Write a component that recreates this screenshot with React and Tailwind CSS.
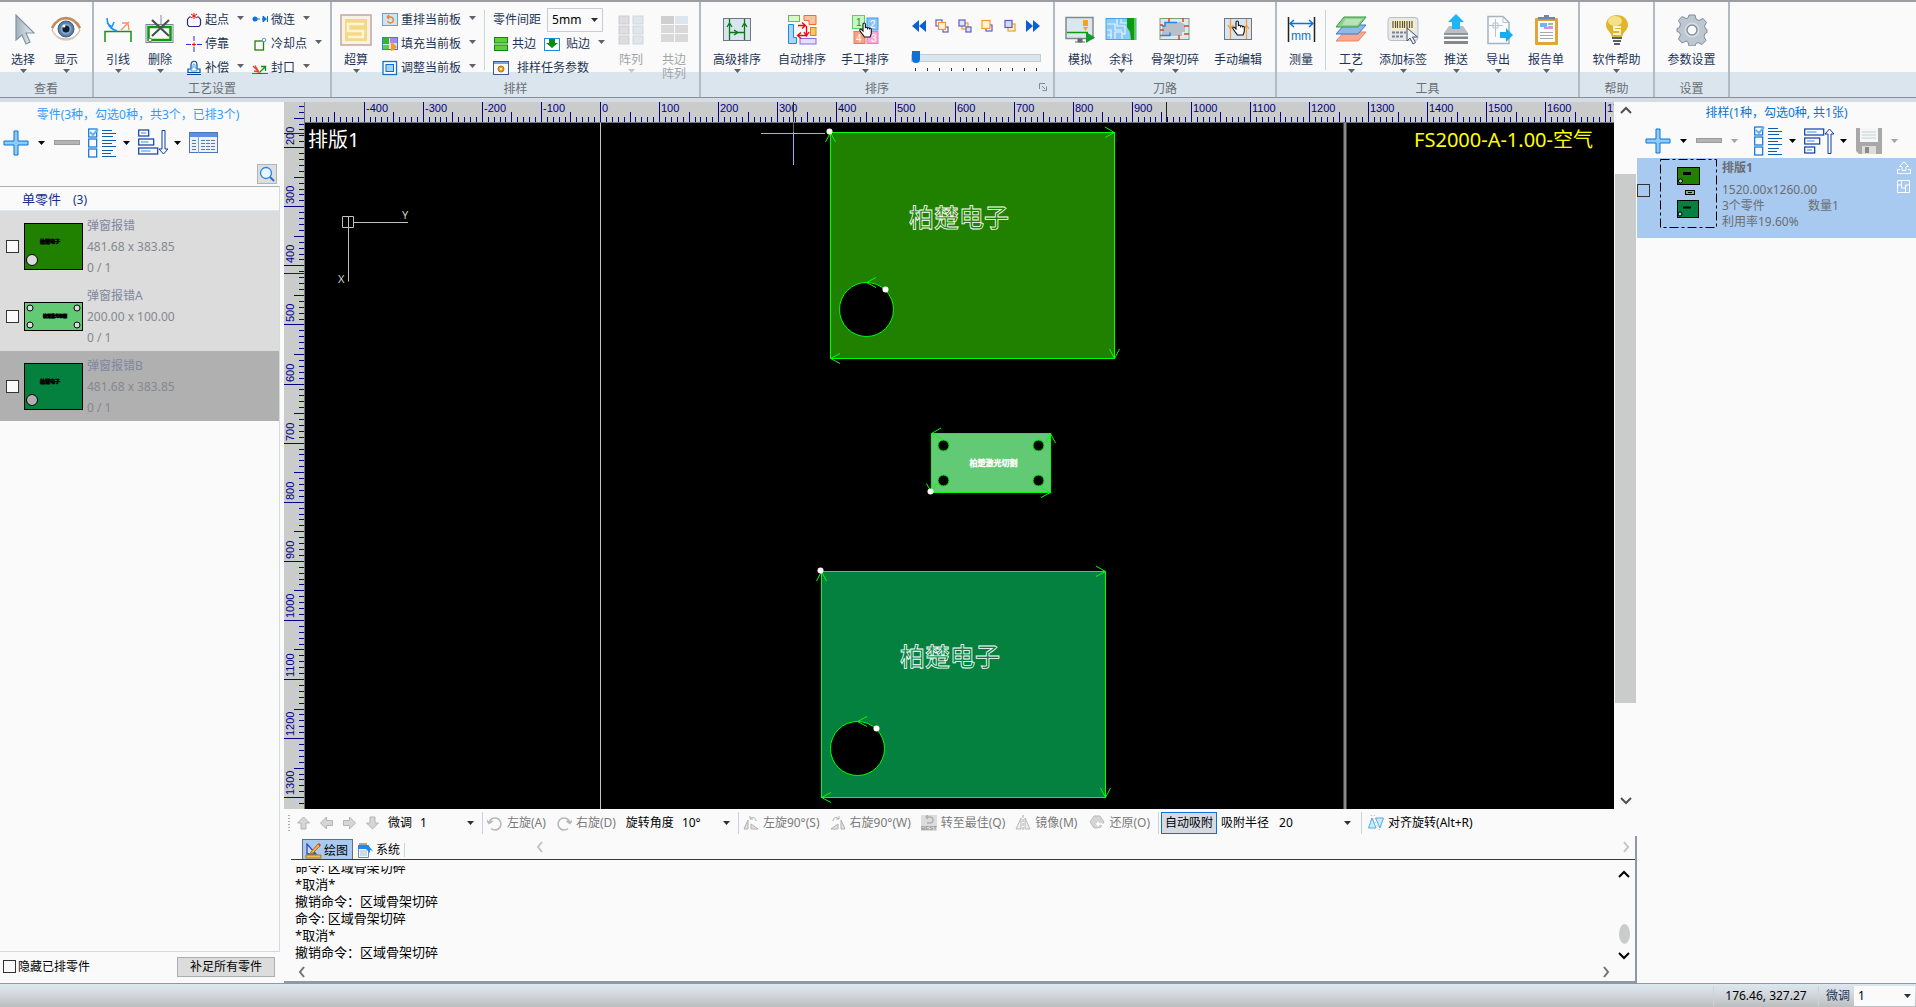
import React from "react";

/* ---------- shared bits ---------- */

function Caret({ className = "text-[#5f6368]" }) {
  return (
    <svg width="7" height="4" viewBox="0 0 7 4" className={"shrink-0 " + className} aria-hidden="true">
      <path d="M0 0h7L3.5 4z" fill="currentColor" />
    </svg>
  );
}

function Chevron({ dir, className = "text-[#505050]", w = 2 }) {
  const d = { up: "M2 9l5-5 5 5", down: "M2 5l5 5 5-5", left: "M9 2L5 7l4 5", right: "M5 2l4 5-4 5" }[dir];
  return (
    <svg width="14" height="14" viewBox="0 0 14 14" className={"shrink-0 " + className} aria-hidden="true">
      <path d={d} fill="none" stroke="currentColor" strokeWidth={w} />
    </svg>
  );
}

function Svg({ w = 32, h = 32, children }) {
  return (
    <svg width={w} height={h} viewBox={`0 0 ${w} ${h}`} className="shrink-0" fill="none" aria-hidden="true">
      {children}
    </svg>
  );
}

function Hand({ x = 0, y = 0 }) {
  return (
    <path
      transform={`translate(${x} ${y})`}
      d="M4 9V2.2c0-1.6 2.4-1.6 2.4 0V6c.3-1 2-.9 2.1.2.4-.8 1.9-.6 2 .4.5-.6 1.8-.4 1.8.8V11c0 2-1 2.6-1.2 4H5.300c-.2-1.500-2-2.600-3-4.200L.8 8.500C.3 7.200 1.900 6.700 2.600 7.600z"
      fill="#fff"
      stroke="#111"
      strokeWidth="1.100"
    />
  );
}

/* ---------- 32px ribbon icons ---------- */

const I = {
  select: (
    <Svg>
      <defs>
        <linearGradient id="cur" x1="0" y1="0" x2="1" y2="0">
          <stop offset="0" stopColor="#9fb0bd" />
          <stop offset="1" stopColor="#eef4f8" />
        </linearGradient>
      </defs>
      <path d="M9 1v25l6-5 4 9 4-2-4-9h8z" fill="url(#cur)" stroke="#8494a3" strokeWidth="1.200" />
    </Svg>
  ),
  eye: (
    <Svg>
      <path d="M2 16C6 7 12 5 16 5s10 3 14 11c-4 7-9 9-14 9S6 23 2 16z" fill="#fff" stroke="#c9a184" />
      <path d="M2 14C6 6 12 4 16 4s10 2 14 10" stroke="#c58a5c" strokeWidth="2.500" />
      <path d="M3 18c4 6 8 8 13 8s9-2 13-8" stroke="#dcc9bb" strokeWidth="1.500" />
      <circle cx="16" cy="15" r="8" fill="#5b7ea6" stroke="#3c5c84" />
      <circle cx="16" cy="15" r="5.500" fill="#86a8ca" />
      <circle cx="16" cy="15" r="3.500" fill="#0d1c33" />
      <circle cx="14" cy="12" r="1.500" fill="#fff" />
    </Svg>
  ),
  lead: (
    <Svg>
      <path d="M3 28V17.500h26V28" stroke="#0a9a0a" strokeWidth="1.500" />
      <path d="M5 4c0 7 3 11 10 13M5 9l5 4M9 15l3-7" stroke="#1e90ff" strokeWidth="1.600" />
      <path d="M19 16l8-8M20 9l6 0 1 7" stroke="#ff8a65" strokeWidth="1.300" />
    </Svg>
  ),
  remove: (
    <Svg>
      <path d="M17 1v9" stroke="#7b8aa0" />
      <rect x="2" y="10.500" width="27" height="18" stroke="#7b8497" />
      <rect x="4.500" y="13" width="22" height="13" stroke="#0a9a0a" strokeWidth="2.500" />
      <path d="M8 6l17 16M25 6L8 22" stroke="#4a4f55" strokeWidth="2.200" />
      <circle cx="6" cy="26" r="1.800" fill="#fff" stroke="#777" />
    </Svg>
  ),
  calc: (
    <Svg>
      <rect x="1" y="1" width="30" height="30" fill="#f8f1e6" stroke="#c4a79a" strokeWidth="1.500" />
      <rect x="5" y="5" width="22" height="22" fill="#f3d888" />
      <path d="M24 10H8v7h15v6H8" stroke="#fff6d6" strokeWidth="2.500" />
    </Svg>
  ),
  arr: (
    <Svg>
      {[2, 12, 22].map((y) => (
        <g key={y}>
          <rect x="4" y={y} width="10" height="8" fill="#dddddd" stroke="#c9ced4" />
          <rect x="18" y={y} width="10" height="8" fill="#dfe6ec" stroke="#cfd8e0" />
        </g>
      ))}
    </Svg>
  ),
  arrEdge: (
    <Svg>
      <path d="M3 2h13v8H3zM3 11h13v8H3zM3 20h13v8H3zM17 11h13v8H17zM17 20h13v8H17z" fill="#d9d9d9" />
      <path d="M3 2h13v8H3z" fill="#cfcfcf" />
      <path d="M17 2h13v8H17z" fill="#dde6ee" />
    </Svg>
  ),
  sortAdv: (
    <Svg>
      <rect x="2.500" y="4.500" width="27" height="22" fill="#d9e5ee" stroke="#6d7785" />
      <path d="M8.500 5v21M23.500 5v21M8 18.500h15M6 13l2.500-4 2.500 4M21 13l2.500-4 2.500 4M13 16l4 2.500-4 2.500" stroke="#0a7a14" strokeWidth="1.300" />
    </Svg>
  ),
  sortAuto: (
    <Svg>
      <rect x="2.500" y="1.500" width="11" height="6" fill="#d9f7d0" stroke="#5ac832" />
      <path d="M18 1.500h12v9h-7v-4h-5z" fill="#f9c6a2" stroke="#ef6c2a" />
      <path d="M2.500 10.500h5v13h3v6h-8z" fill="#a9d5fb" stroke="#1e88e5" />
      <rect x="24.500" y="13.500" width="5.500" height="8" fill="#f8c864" stroke="#d28a1a" />
      <rect x="14" y="24.500" width="16" height="5.500" fill="#e5e0ff" stroke="#7d6ee0" />
      <path d="M12 11.500h7M16 8.500l3.500 3-3.500 3M20.500 12v10M18 18l2.500 4 2.500-4M20 21.500h-8M15 18.500l-3.500 3 3.500 3" stroke="#f00" strokeWidth="1.300" />
    </Svg>
  ),
  sortHand: (
    <Svg>
      <rect x="3.500" y="1.500" width="12" height="13" fill="#c8f5c0" stroke="#5fcf60" />
      <rect x="18" y="4" width="11" height="12" fill="#8cc4f5" stroke="#3b9bec" />
      <rect x="5" y="17.500" width="11" height="12" fill="#f7a184" stroke="#ef7850" />
      <rect x="18" y="17.500" width="11" height="12" fill="#f9a9d6" stroke="#ee79bb" />
      <g fontFamily="Liberation Sans, sans-serif" fontSize="10">
        <text x="7" y="12" fill="#2a8a2a">1</text>
        <text x="21" y="14" fill="#fff">2</text>
        <text x="7" y="28" fill="#fff">4</text>
        <text x="22" y="28" fill="#fff">3</text>
      </g>
      <Hand x={10} y={8} />
    </Svg>
  ),
  simulate: (
    <Svg>
      <rect x="2" y="3.500" width="27" height="21" fill="#dbe7ee" stroke="#7f8a93" strokeWidth="1.500" />
      <path d="M3 18.500h21" stroke="#0a9a0a" strokeWidth="1.500" />
      <path d="M11 28h10M14 25h4v3h-4z" stroke="#666" fill="#666" />
      <path d="M19 6h5v6h-5zM19 13h5l-2.500 4z" fill="#ff9a2e" />
      <path d="M22 18l9 5.500-9 5.500z" fill="#0d9c2c" />
    </Svg>
  ),
  remnant: (
    <Svg>
      <rect x="1" y="4.500" width="30" height="21" fill="#8ccafa" stroke="#4aa3e0" />
      <path d="M2 10h8v6h7M6 25V16H2M12 5v7h8M10 25v-7h7v7M2 21h4M20 12v8h-3M16 5v4h6" stroke="#e6f6ff" strokeWidth="1.200" />
      <path d="M22 4h9v22h-5l-1-8-3-5z" fill="#0b9a12" />
      <path d="M29 4h2v22h-2z" fill="#5cc95c" />
    </Svg>
  ),
  skeleton: (
    <Svg>
      <rect x="1" y="4.500" width="29" height="21" fill="#dfe8ee" stroke="#7aa07a" />
      <path d="M3 21v-9h3V8h16l4 3v7h-3v4H12v-1z" fill="#b9bfc6" />
      <path d="M1 21.500h10v-3M3 12h3V8.500h12" stroke="#1e88e5" strokeWidth="1.500" />
      <path d="M10 4v4M24 4v4M25 12h5M1 16h4M25 20h5M20 21v5M1 11h3" stroke="#d3452b" strokeWidth="1.500" />
    </Svg>
  ),
  manual: (
    <Svg>
      <rect x="2.500" y="4.500" width="27" height="21" fill="#d9e5ee" stroke="#6d7785" />
      <path d="M8.500 5v20M24.500 5v20M6 11l2.500 4 2.500-4M22 15l2.500-4 2.500 4" stroke="#f59a3c" strokeWidth="1.300" />
      <Hand x={10} y={6} />
    </Svg>
  ),
  measure: (
    <Svg>
      <path d="M3.500 3v25M29.500 3v25" stroke="#222" strokeWidth="1.500" />
      <path d="M5 9.500h23M9 6L5 9.500 9 13M24 6l4 3.500-4 3.500" stroke="#0b72d8" strokeWidth="1.500" />
      <text x="6" y="26" fill="#0b72d8" fontFamily="Liberation Sans, sans-serif" fontSize="12">mm</text>
    </Svg>
  ),
  layers: (
    <Svg>
      <path d="M9 18h22l-8 9H1z" fill="#f6a98e" stroke="#ee8560" />
      <path d="M9 11h22l-8 9H1z" fill="#8fb8e8" stroke="#3b78c8" />
      <path d="M9 3h22l-8 10H1z" fill="#8fcf90" stroke="#2f9a40" />
      <path d="M11 5h16l-5 6H7z" fill="#b9e3b6" />
    </Svg>
  ),
  label: (
    <Svg>
      <rect x="1" y="3.500" width="30" height="23" rx="3" fill="#e6e9ec" stroke="#b8bfc6" />
      <rect x="4" y="6" width="24" height="10" fill="#f9edc6" />
      <path d="M6 7v7M8.500 7v7M10.500 7v7M13 7v7M15.500 7v7M17.500 7v7M20 7v7M22.500 7v7M25 7v7" stroke="#5c5540" strokeWidth="1.200" />
      <path d="M5 18.500h14M5 22.500h12" stroke="#7a828a" strokeWidth="2" strokeDasharray="3 1" />
      <path d="M20 14v13l3-3 3 6 2.500-1.500-3-5.500h5z" fill="#eef3f6" stroke="#42556b" />
    </Svg>
  ),
  push: (
    <Svg>
      <path d="M16 0l8 8h-4v7h-8V8H8z" fill="#1eb4f5" />
      <path d="M9 12h3v3h8v-3h3l5 7H4z" fill="#b9c0c4" />
      <path d="M4 19h24v2H4z" fill="#8f9699" />
      <path d="M4 22.500h24V25H4zM4 27h24v3H4z" fill="#85888a" />
    </Svg>
  ),
  exportDoc: (
    <Svg>
      <path d="M6 2.500h15l6 6v21H6z" fill="#fafcfd" stroke="#a4b4c0" strokeWidth="1.500" />
      <path d="M21 2.500v6h6M13.500 5v18M7 11.500h14M11 9h5v5h-5z" stroke="#b8c4cd" />
      <path d="M18 18h6v-4l7 7-7 7v-4h-6z" fill="#16aef0" />
    </Svg>
  ),
  report: (
    <Svg>
      <rect x="5" y="4" width="23" height="27" rx="1" fill="#e0a63a" />
      <rect x="8" y="7" width="17" height="21" fill="#fdfdfd" />
      <path d="M8 3h17v2.500H8zM14 1h5v3h-5z" fill="#6d86ab" />
      <path d="M10 9h7v4h-7z" fill="#6fb5f2" />
      <path d="M18 9h5v2h-5z" fill="#7fd08a" />
      <path d="M18 12h5v3h-9v-2h4z" fill="#dc8fdc" />
      <path d="M10 18.500h13M10 21.500h13M10 24.500h13" stroke="#a8a8a8" />
    </Svg>
  ),
  bulb: (
    <Svg>
      <path d="M16 1c6 0 11 4 11 10 0 5-5 7-6 12H11C10 18 5 16 5 11 5 5 10 1 16 1z" fill="#dfb628" />
      <ellipse cx="14" cy="7" rx="7" ry="5" fill="#f6e08a" />
      <path d="M20 13h-7v3h6v4h-7" stroke="#fff6cf" strokeWidth="1.800" />
      <path d="M11 24h10M12 27h8M13 30h6" stroke="#5b5e63" strokeWidth="2" />
    </Svg>
  ),
  gear: (
    <Svg>
      <path
        d="M13 1h6l1 4 3 1.500 4-2 3.500 4-2 3.500 1 3 1.500.5v3l-2 1-1 3 2 4-4 4-4-2-2 1-1 2.500h-6L12 28l-2-1-4 2-3.500-4 2-4-1-2.500-2.500-1v-3l2.500-1L4.500 10l-2-3.500 3.500-4 4 2L12 4z"
        fill="#bcc7d1"
        stroke="#7f8c99"
      />
      <circle cx="16" cy="16" r="7.500" fill="#d6dde3" />
      <circle cx="16" cy="16" r="5" fill="#fafafa" stroke="#8592a0" strokeWidth="1.500" />
    </Svg>
  ),
};

/* ---------- 16px ribbon icons ---------- */

const S = {
  start: (
    <Svg w={16} h={16}>
      <path d="M5 5H3.500L1.500 7.500v5L3 14.500h10l1.500-2v-5L12.500 5H11" stroke="#2a2a8a" strokeWidth="1.200" />
      <path d="M8 1v6M5 2l6 4M11 2L5 6" stroke="#f00" />
    </Svg>
  ),
  dock: (
    <Svg w={16} h={16}>
      <path d="M0 8.500h5M11 8.500h5M8 0v5M8 11v5" stroke="#2a2af0" />
      <path d="M6 8.500h4M8 6.500v4" stroke="#f00" />
    </Svg>
  ),
  comp: (
    <Svg w={16} h={16}>
      <path d="M1 14.500h14M2 12.500V9h3V5c0-5 6-5 6 0v4h3v3.500z" stroke="#0a4aa0" strokeWidth="1.200" />
      <path d="M5 11V8h2V5c0-1.500 2-1.500 2 0v3h2v3z" stroke="#3fa6f5" />
    </Svg>
  ),
  micro: (
    <Svg w={16} h={16}>
      <circle cx="3" cy="7" r="2.500" fill="#0b72d8" />
      <path d="M5 7h3M10 7h2" stroke="#0b72d8" />
      <path d="M11 4l3.500 3-3.500 3zM15.500 4v6" fill="#0b72d8" stroke="#0b72d8" />
    </Svg>
  ),
  cool: (
    <Svg w={16} h={16}>
      <rect x="3" y="5" width="8.500" height="9" stroke="#2a7a14" strokeWidth="1.300" />
      <circle cx="12" cy="4" r="1.800" fill="#fff" stroke="#5a9af0" />
    </Svg>
  ),
  seal: (
    <Svg w={16} h={16}>
      <path d="M0 13.500h16" stroke="#f00" />
      <path d="M0 13.500h6M10 13.500h6" stroke="#0a9a0a" />
      <path d="M1 6l6 6M3 5.500l4 6.500-5-1" stroke="#e8452a" strokeWidth="1.300" />
      <path d="M8 12l6-6M9 6.500h4.500V11" stroke="#0a9a0a" strokeWidth="1.300" />
    </Svg>
  ),
  rearr: (
    <Svg w={16} h={16}>
      <rect x="0.500" y="1.500" width="15" height="12" fill="#cfe4f2" stroke="#5fa6d6" />
      <path d="M5 5h3.500a3 3 0 1 1-3 4M5 5l2-2M5 5l2 2" stroke="#f0802a" strokeWidth="1.300" />
    </Svg>
  ),
  fillPlate: (
    <Svg w={16} h={16}>
      <rect x="0.500" y="1.500" width="15" height="12" fill="#cfe4f2" stroke="#1e88e5" />
      <path d="M1 2h6v6H1z" fill="#37b32a" />
      <path d="M8 2h7v5H8z" fill="#a08cf0" />
      <path d="M1 9h6v4H1z" fill="#5fcf40" />
      <path d="M9 6l3 2 3 3-3 3-3 1z" fill="#ff9a1e" />
    </Svg>
  ),
  adjust: (
    <Svg w={16} h={16}>
      <rect x="1" y="1.500" width="13.500" height="13" fill="#fff" stroke="#0b72d8" strokeWidth="1.300" />
      <rect x="4" y="4.500" width="7.500" height="7" fill="#a9d2fa" stroke="#0b72d8" />
    </Svg>
  ),
  coEdge: (
    <Svg w={16} h={16}>
      <rect x="1.500" y="1.500" width="13" height="5.500" fill="#5fcf32" stroke="#0a8a14" />
      <rect x="1.500" y="9" width="13" height="5.500" fill="#5fcf32" stroke="#0a8a14" />
    </Svg>
  ),
  stick: (
    <Svg w={16} h={16}>
      <rect x="0.500" y="2.500" width="15" height="12" fill="#fff" stroke="#1e88e5" />
      <path d="M5 3h6v4h3l-6 5-6-5h3z" fill="#0a8a14" />
    </Svg>
  ),
  params: (
    <Svg w={16} h={16}>
      <rect x="0.500" y="1.500" width="15" height="13" fill="#f6f8fb" stroke="#3b5c90" />
      <path d="M1 2h14v2H1z" fill="#7aa3dc" />
      <circle cx="8" cy="9" r="3" fill="#e8a21e" stroke="#b87410" />
      <circle cx="8" cy="9" r="1" fill="#fff" />
    </Svg>
  ),
};

/* ---------- ribbon building blocks ---------- */

function Big({ icon, label, label2, w, caret = true, disabled = false }) {
  return (
    <button
      type="button"
      disabled={disabled}
      className={"flex flex-col items-center pt-3 whitespace-nowrap leading-[14px] " + (disabled ? "text-[#a0a4a8] " : "text-[#1d3557] ") + w}
    >
      {icon}
      <span className="mt-1.5 leading-4">{label}</span>
      {label2 ? <span className="leading-3">{label2}</span> : null}
      {caret ? <Caret className={disabled ? "mt-px text-[#c4c8cc]" : "mt-px text-[#5f6368]"} /> : null}
    </button>
  );
}

function Small({ icon, label, caret = false, gap = "gap-[3px]" }) {
  return (
    <button type="button" className="flex h-6 items-center whitespace-nowrap text-[#1d3557]">
      <span className={"flex items-center " + gap}>
        {icon}
        {label}
      </span>
      {caret ? <Caret className="-mt-1 ml-2 text-[#5f6368]" /> : null}
    </button>
  );
}

function Group({ title, children, launcher = false }) {
  return (
    <section className="relative flex shrink-0 flex-col border-r-2 border-[#b4bac2]">
      <div className="flex h-[79px] items-start">{children}</div>
      <h2 className="text-center leading-4 text-[#6b7075]">{title}</h2>
      {launcher ? (
        <button type="button" aria-label="排序选项" className="absolute right-1.5 bottom-1.5">
          <Svg w={8} h={8}>
            <path d="M0.500 6V.5H6M3 3l3 3M7.500 3.500v4h-4" stroke="#7f8a96" />
          </Svg>
        </button>
      ) : null}
    </section>
  );
}

function VLine({ className }) {
  return <div className={"w-px shrink-0 bg-[#cbd3da] " + className} />;
}

function Picker({ id, options, className, selectClass }) {
  return (
    <span className={"relative flex items-center " + className}>
      <select id={id} defaultValue={options[0]} className={"w-full appearance-none bg-transparent text-black outline-none " + selectClass}>
        {options.map((o) => (
          <option key={o}>{o}</option>
        ))}
      </select>
      <Caret className="pointer-events-none absolute right-1 text-[#303030]" />
    </span>
  );
}

function NavIcons() {
  const sq = (x, y, s, c, f) => <rect x={x} y={y} width={s} height={s} fill={f} stroke={c} strokeWidth="1.200" />;
  const b = "#5c5cc8";
  const o = "#f59a32";
  return (
    <div className="flex h-9 items-center justify-between">
      <button type="button" aria-label="第一个">
        <Svg w={16} h={16}><path d="M8 2v12L1 8zM15 2v12L8 8z" fill="#0b5fd0" /></Svg>
      </button>
      <button type="button" aria-label="移到最前">
        <Svg w={16} h={16}>{sq(2, 2, 6, b, "#fff")}{sq(9, 9, 5, b, "#fff")}{sq(4.500, 4.500, 7, o, "#fff3d6")}</Svg>
      </button>
      <button type="button" aria-label="上一个">
        <Svg w={16} h={16}>{sq(5, 5, 6, o, "#fff3d6")}{sq(2, 2, 6, b, "#dfe6ff")}{sq(9, 9, 5, b, "#dfe6ff")}</Svg>
      </button>
      <button type="button" aria-label="下一个">
        <Svg w={16} h={16}>{sq(7, 7, 6, b, "#fff")}{sq(3, 2.500, 8, o, "#fff3d6")}</Svg>
      </button>
      <button type="button" aria-label="移到最后">
        <Svg w={16} h={16}>{sq(6, 6, 7, o, "#fff3d6")}{sq(3, 2.500, 7, b, "#d4dcf2")}</Svg>
      </button>
      <button type="button" aria-label="最后一个">
        <Svg w={16} h={16}><path d="M1 2v12l7-6zM8 2v12l7-6z" fill="#0b5fd0" /></Svg>
      </button>
    </div>
  );
}

function Ribbon() {
  return (
    <header className="flex shrink-0 overflow-hidden border-t-2 border-b border-t-[#9b9da2] border-b-[#8a8e9a] bg-[linear-gradient(to_bottom,#fafafa_70px,#dae5ed_70px)]">
      <Group title="查看">
        <Big icon={I.select} label="选择" w="w-[46px]" />
        <Big icon={I.eye} label="显示" w="w-[46px] pr-1.5" />
      </Group>
      <Group title="工艺设置">
        <Big icon={I.lead} label="引线" w="w-12" />
        <Big icon={I.remove} label="删除" w="w-9" />
        <div className="flex flex-col pt-1.5 pl-2">
          <Small icon={S.start} label="起点" caret />
          <Small icon={S.dock} label="停靠" />
          <Small icon={S.comp} label="补偿" caret />
        </div>
        <div className="flex flex-col pt-1.5 pr-2 pl-2">
          <Small icon={S.micro} label="微连" caret />
          <Small icon={S.cool} label="冷却点" caret />
          <Small icon={S.seal} label="封口" caret />
        </div>
      </Group>
      <Group title="排样">
        <Big icon={I.calc} label="超算" w="w-12" />
        <div className="flex flex-col pt-1.5 pl-0.5">
          <Small icon={S.rearr} label="重排当前板" caret />
          <Small icon={S.fillPlate} label="填充当前板" caret />
          <Small icon={S.adjust} label="调整当前板" caret />
        </div>
        <VLine className="mt-2 ml-2 h-[60px]" />
        <div className="flex w-32 flex-col pt-1.5 pl-2">
          <div className="flex h-6 items-center text-[#1d3557]">
            <label htmlFor="gap" className="whitespace-nowrap">零件间距</label>
            <Picker id="gap" options={["5mm", "10mm"]} className="ml-1.5 h-6 w-14 border border-[#c8ccd0] bg-[#fafafa]" selectClass="pl-1 text-xs" />
          </div>
          <div className="flex">
            <Small icon={S.coEdge} label="共边" />
            <span className="ml-2">
              <Small icon={S.stick} label="贴边" caret gap="gap-1.5" />
            </span>
          </div>
          <Small icon={S.params} label="排样任务参数" gap="gap-2" />
        </div>
        <Big icon={I.arr} label="阵列" w="w-9" disabled />
        <Big icon={I.arrEdge} label="共边" label2="阵列" w="w-[50px]" caret={false} disabled />
      </Group>
      <Group title="排序" launcher>
        <Big icon={I.sortAdv} label="高级排序" w="w-[72px]" />
        <Big icon={I.sortAuto} label="自动排序" w="w-[58px]" caret={false} />
        <Big icon={I.sortHand} label="手工排序" w="w-[68px]" />
        <div className="flex w-[154px] flex-col px-3 pt-1.5">
          <NavIcons />
          <input
            type="range"
            aria-label="排序进度"
            defaultValue="0"
            className="mt-2 h-3 w-full appearance-none bg-transparent [&::-webkit-slider-runnable-track]:h-2 [&::-webkit-slider-runnable-track]:border [&::-webkit-slider-runnable-track]:border-[#c3cbd2] [&::-webkit-slider-runnable-track]:bg-[#dae5ed] [&::-webkit-slider-thumb]:-mt-1 [&::-webkit-slider-thumb]:h-3 [&::-webkit-slider-thumb]:w-2 [&::-webkit-slider-thumb]:appearance-none [&::-webkit-slider-thumb]:rounded-b-sm [&::-webkit-slider-thumb]:bg-[#0b72d8]"
          />
          <div className="mt-1 flex justify-between px-1">
            {Array.from({ length: 11 }, (_, i) => (
              <span key={i} className="h-[3px] w-px bg-[#333]" />
            ))}
          </div>
        </div>
      </Group>
      <Group title="刀路">
        <Big icon={I.simulate} label="模拟" w="w-[50px]" caret={false} />
        <Big icon={I.remnant} label="余料" w="w-8" />
        <Big icon={I.skeleton} label="骨架切碎" w="w-[76px]" />
        <Big icon={I.manual} label="手动编辑" w="w-[62px] pr-3" caret={false} />
      </Group>
      <Group title="工具">
        <Big icon={I.measure} label="测量" w="w-12" caret={false} />
        <VLine className="mt-2 h-[60px]" />
        <Big icon={I.layers} label="工艺" w="w-[50px]" />
        <Big icon={I.label} label="添加标签" w="w-[54px]" />
        <Big icon={I.push} label="推送" w="w-[52px]" />
        <Big icon={I.exportDoc} label="导出" w="w-8" />
        <Big icon={I.report} label="报告单" w="w-16" />
      </Group>
      <Group title="帮助">
        <Big icon={I.bulb} label="软件帮助" w="w-[73px]" />
      </Group>
      <Group title="设置">
        <Big icon={I.gear} label="参数设置" w="w-[73px]" caret={false} />
      </Group>
    </header>
  );
}

/* ---------- side panel toolbars ---------- */

const Plus = (
  <Svg w={26} h={26}>
    <path d="M11 1h4v10h10v4H15v10h-4V15H1v-4h10z" fill="#8fcbf7" stroke="#0b72d8" />
  </Svg>
);
const Minus = (
  <Svg w={26} h={26}>
    <rect x="0.500" y="10.500" width="25" height="4" fill="#b4b4b4" stroke="#9c9c9c" />
  </Svg>
);
const Checks = (
  <Svg w={29} h={30}>
    {[1, 11, 21].map((y) => (
      <rect key={y} x="0.700" y={y} width="8" height="8" stroke="#0b72d8" strokeWidth="1.200" />
    ))}
    <path d="M2 4l3 3 5-6" stroke="#5fb4f5" strokeWidth="2" />
    <path d="M14 2.500h10M14 5.500h14M14 8.500h11M14 12.500h14M14 15.500h10M14 18.500h14M14 22.500h11M14 25.500h9M14 28.500h14" stroke="#0b5fae" strokeWidth="1.200" />
  </Svg>
);

function SortIcon({ up = false }) {
  const rows = up ? [[2, 19], [11, 15], [20, 10]] : [[1, 10], [10, 15], [19, 19]];
  return (
    <Svg w={30} h={28}>
      {rows.map(([y, w]) => (
        <g key={y}>
          <rect x="0.700" y={y} width={w} height="6" stroke="#0a3fa8" strokeWidth="1.200" />
          <path d={`M3 ${y + 3}h${w / 2}`} stroke="#3f8fe8" />
        </g>
      ))}
      {up ? (
        <path d="M24 26.500V7h-3l4.500-5L30 7h-3v19.500z" stroke="#0a3fa8" />
      ) : (
        <path d="M24 1.500V20h-3l4.500 5 4.500-5h-3V1.500z" stroke="#0a3fa8" />
      )}
    </Svg>
  );
}

function ToolBtn({ label, children }) {
  return (
    <button type="button" aria-label={label} className="flex h-[30px] items-center">
      {children}
    </button>
  );
}

function Tick({ id, label, className = "" }) {
  return (
    <input
      type="checkbox"
      id={id}
      aria-label={label}
      className={"size-[13px] shrink-0 appearance-none border border-[#333] bg-[#fafafa] checked:bg-[#0b72d8] " + className}
    />
  );
}

const parts = [
  { name: "弹窗报错", size: "481.68 x 383.85", fill: "#208000", kind: "plate" },
  { name: "弹窗报错A", size: "200.00 x 100.00", fill: "#62c974", kind: "tag" },
  { name: "弹窗报错B", size: "481.68 x 383.85", fill: "#04803f", kind: "plate", active: true },
];

const cadFont = "'Noto Sans CJK SC', sans-serif";

function Thumb({ part }) {
  const bg = part.active ? "#b0b0b0" : "#dcdcdc";
  if (part.kind === "tag") {
    return (
      <Svg w={59} h={29}>
        <rect x="0.500" y="0.500" width="58" height="28" fill={part.fill} stroke="#000" />
        {[[6, 6], [53, 6], [6, 23], [53, 23]].map(([x, y]) => (
          <circle key={x + "-" + y} cx={x} cy={y} r="3" fill={bg} stroke="#000" />
        ))}
        <text x="19" y="16" fontSize="4" fontWeight="900" fontFamily={cadFont} fill="#000" stroke="#000" strokeWidth="0.500">柏楚激光切割</text>
      </Svg>
    );
  }
  return (
    <Svg w={59} h={47}>
      <rect x="0.500" y="0.500" width="58" height="46" fill={part.fill} stroke="#000" />
      <circle cx="8" cy="37" r="5.500" fill={bg} stroke="#000" />
      <text x="16" y="20" fontSize="5" fontWeight="900" fontFamily={cadFont} fill="#000" stroke="#000" strokeWidth="0.500">柏楚电子</text>
    </Svg>
  );
}

function PartsPanel() {
  return (
    <aside className="flex w-[280px] shrink-0 flex-col">
      <div className="flex flex-1 flex-col">
        <h2 className="pt-1 pr-1 text-center leading-[18px] text-[#3399ff]">零件(3种，勾选0种，共3个，已排3个)</h2>
        <div className="mt-1 flex h-[30px] items-center pl-[3px]">
          <ToolBtn label="添加零件">{Plus}</ToolBtn>
          <Caret className="mr-[9px] ml-[9px] text-black" />
          <ToolBtn label="删除零件">{Minus}</ToolBtn>
          <span className="w-2" />
          <ToolBtn label="勾选">{Checks}</ToolBtn>
          <Caret className="mr-2 ml-1.5 text-black" />
          <ToolBtn label="零件排序"><SortIcon /></ToolBtn>
          <Caret className="mr-2 ml-1.5 text-black" />
          <ToolBtn label="零件列表">
            <Svg w={30} h={22}>
              <rect x="0.500" y="0.500" width="28" height="20" fill="#eef2f8" stroke="#4a78b8" />
              <path d="M1 1h27v4H1z" fill="#5b8fe0" />
              <path d="M9.500 5v16" stroke="#8aa8cc" />
              <path d="M3 8.500h4M3 11.500h4M3 14.500h4M3 17.500h4M12 8.500h14M12 11.500h14M12 14.500h14M12 17.500h14" stroke="#5a7aa4" strokeDasharray="4 1" />
            </Svg>
          </ToolBtn>
        </div>
        <div className="flex justify-end pt-1.5 pr-[3px] pb-0.5">
          <button type="button" aria-label="搜索" className="flex size-5 items-center justify-center border border-[#b4b4b4] bg-[#dedede]">
            <Svg w={16} h={16}>
              <circle cx="7" cy="7" r="5.500" stroke="#1e88f0" strokeWidth="1.300" fill="#eef6fd" />
              <path d="M11 11l4 4" stroke="#1e6fe0" strokeWidth="2" />
            </Svg>
          </button>
        </div>
        <div className="flex flex-1 flex-col border-t border-r border-b border-t-[#a3b1bd] border-r-[#d6d9e0] border-b-[#d6d9e0]">
          <h3 className="h-6 border-b border-[#dfe6ec] pl-[22px] leading-6 text-[#14308c]">
            <span className="text-[13px]">单零件</span>
            <span className="ml-3">(3)</span>
          </h3>
          <ul>
            {parts.map((p, i) => (
              <li key={p.name} className={"flex h-[70px] items-center pl-1.5 " + (p.active ? "bg-[#b0b0b0]" : "bg-[#dcdcdc]")}>
                <Tick id={"part" + i} label={p.name} />
                <span className="ml-[5px]"><Thumb part={p} /></span>
                <div className="ml-1 leading-[21px] text-[#85888f]">
                  <div className="text-[#8186a0]">{p.name}</div>
                  <div>{p.size}</div>
                  <div>0 / 1</div>
                </div>
              </li>
            ))}
          </ul>
        </div>
      </div>
      <div className="flex h-[31px] items-center justify-between pr-[5px] pb-0.5 pl-[3px]">
        <label htmlFor="hide" className="flex items-center gap-0.5 text-black">
          <Tick id="hide" label="隐藏已排零件" />
          隐藏已排零件
        </label>
        <button type="button" className="h-5 w-[98px] border border-[#adadad] bg-[#dcdcdc] leading-4 text-black">补足所有零件</button>
      </div>
    </aside>
  );
}

/* ---------- rulers and drawing area ---------- */

const PX_PER_MM = 0.5909;
const rulerFont = "'Liberation Sans', sans-serif";

function RulerTop() {
  const ticks = [];
  for (let v = -490; v <= 2400; v += 10) ticks.push(v);
  return (
    <svg className="block h-[21px] w-full border-b border-[#6e7480] bg-[#cacccb]" aria-hidden="true">
      {ticks.map((v) => {
        const x = Math.round(295 + v * PX_PER_MM) + 0.5;
        const top = v % 100 === 0 ? 0 : v % 50 === 0 ? 10 : 15;
        return <path key={v} d={`M${x} ${top}V20`} stroke="#000088" />;
      })}
      {ticks.filter((v) => v % 100 === 0 && v <= 1700).map((v) => (
        <text key={v} x={Math.round(295 + v * PX_PER_MM) + 2} y="10" fontSize="11" fill="#000088" fontFamily={rulerFont}>{v}</text>
      ))}
      <path d="M488.500 0V20M861.500 0V20" stroke="#222" />
    </svg>
  );
}

function RulerLeft() {
  const ticks = [];
  for (let v = 130; v <= 2000; v += 10) ticks.push(v);
  return (
    <svg className="block h-full w-[21px] shrink-0 border-r border-[#6e7480] bg-[#cacccb]" aria-hidden="true">
      {ticks.map((v) => {
        const y = Math.round(v * PX_PER_MM - 73) + 0.5;
        const left = v % 100 === 0 ? 0 : v % 50 === 0 ? 10 : 15;
        return <path key={v} d={`M${left} ${y}H20`} stroke="#000088" />;
      })}
      {ticks.filter((v) => v % 100 === 0 && v <= 1300).map((v) => (
        <text key={v} transform={`translate(10 ${Math.round(v * PX_PER_MM - 73) - 2}) rotate(-90)`} fontSize="11" fill="#000088" fontFamily={rulerFont}>{v}</text>
      ))}
      <path d="M0 31.500H20M0 171.500H20" stroke="#222" />
    </svg>
  );
}

function Plate({ x, y, fill }) {
  return (
    <g transform={`translate(${x} ${y})`}>
      <rect x="0.500" y="0.500" width="284" height="226" fill={fill} stroke="#00ff00" />
      <circle cx="36.500" cy="177.500" r="27" fill="#000" stroke="#00ff00" />
      <path
        d="M-4.500 10L.5.500l5 9.500M275 -5l9.500 5.500-9.500 5M279.500 217l5 9.500 5-9.500M10 221.500L.5 226.500l9.500 5M46 145.500l-9.500 5 9.500 5"
        fill="none"
        stroke="#00ff00"
      />
      <text x="79" y="95" fontSize="25" fill={fill} stroke="#fff" strokeWidth="0.800" fontWeight="500" fontFamily={cadFont}>柏楚电子</text>
      <circle cx="-0.500" cy="-0.500" r="3" fill="#fff" />
      <circle cx="55.500" cy="157.500" r="3" fill="#fff" />
    </g>
  );
}

function Drawing() {
  return (
    <svg className="block w-full flex-1 bg-black" role="img" aria-label="排版图">
      <path d="M295.500 0v2000" stroke="#c4c4c4" />
      <path d="M1040 0v2000" stroke="#8a8a8a" strokeWidth="3" />
      <Plate x={525} y={9} fill="#208000" />
      <Plate x={516} y={448} fill="#04803f" />
      <g transform="translate(626 310)">
        <rect x="0.500" y="0.500" width="119" height="59" fill="#62c974" stroke="#00ff00" />
        {[[12.500, 12.500], [107.500, 12.500], [12.500, 47.500], [107.500, 47.500]].map(([cx, cy]) => (
          <circle key={cx + "-" + cy} cx={cx} cy={cy} r="5.500" fill="#000" stroke="#00ff00" />
        ))}
        <path d="M10-5L.5.500l9.500 5M115 10l4.500-9.500 5 9.500M110 54.500l9.500 5-9.500 5M-4.500 50.500l5 9 5-9" fill="none" stroke="#00ff00" />
        <text x="38.500" y="33" fontSize="8" fontWeight="700" fill="#fff" stroke="#fff" strokeWidth="0.300" fontFamily={cadFont}>柏楚激光切割</text>
        <circle cx="-0.500" cy="58.500" r="3" fill="#fff" />
      </g>
      <path d="M488.500 0v9" stroke="#6b6520" />
      <path d="M456 10.500h64M488.500 9v33" stroke="#a8a8f0" />
      <path d="M37.500 93.500h11v11h-11zM43.500 93.500v65M49 99.500h54" fill="none" stroke="#c0c0c0" />
      <g fontFamily="'Noto Sans', 'Noto Sans CJK SC', sans-serif">
        <text x="97" y="96" fontSize="11" fill="#d0d0d0">Y</text>
        <text x="33" y="160" fontSize="11" fill="#d0d0d0">X</text>
        <text x="3" y="24" fontSize="20" fill="#ffffff">排版1</text>
        <svg x="100%" overflow="visible">
          <text x="-21" y="24" fontSize="20" fill="#ffff00" textAnchor="end">FS2000-A-1.00-空气</text>
        </svg>
      </g>
    </svg>
  );
}

/* ---------- edit toolbar under the drawing ---------- */

function ArrowIcon({ rot }) {
  return (
    <svg width="15" height="14" viewBox="0 0 15 14" aria-hidden="true">
      <path transform={`rotate(${rot} 7.500 7)`} d="M7.500 1l6 6h-3.500v6h-5V7H1.500z" fill="#d6d6d6" stroke="#b4b4b4" />
    </svg>
  );
}

const E = {
  ccw: <Svg w={16} h={16}><path d="M4 13.500A6 6 0 1 0 2 8M-.5 5L2 8.500 5.500 6" stroke="#b8b8b8" strokeWidth="1.600" /></Svg>,
  cw: <Svg w={16} h={16}><path d="M12 13.500A6 6 0 1 1 14 8M10.500 6L14 8.500 16.500 5" stroke="#b8b8b8" strokeWidth="1.600" /></Svg>,
  ccw90: <Svg w={16} h={16}><path d="M1 14L5 5v9zM8 14V9l7 5z" fill="#e2e2e2" stroke="#b0b0b0" /><path d="M7 4c3-3 6-1 6 2M7 1v3h3" stroke="#b0b0b0" /></Svg>,
  cw90: <Svg w={16} h={16}><path d="M15 14L11 5v9zM8 14V9l-7 5z" fill="#e2e2e2" stroke="#b0b0b0" /><path d="M9 4C6 1 3 3 3 6M9 1v3H6" stroke="#b0b0b0" /></Svg>,
  best: (
    <Svg w={16} h={16}>
      <rect width="16" height="16" fill="#dcdcdc" />
      <path d="M5 2h4a3 3 0 0 1 0 6H6M7 0L5 2l2 2" stroke="#b0b0b0" strokeWidth="1.400" />
      <text x="0" y="15" fontSize="6" fontWeight="700" fill="#909090" fontFamily="Liberation Sans, sans-serif">BEST</text>
    </Svg>
  ),
  mirror: <Svg w={16} h={16}><path d="M8 0v16" stroke="#a8a8a8" strokeDasharray="3 1" /><path d="M1 14L6 3v11zM15 14L10 3v11z" fill="#eee" stroke="#b8b8b8" /></Svg>,
  restore: <Svg w={16} h={16}><path d="M5 1h6l4 6-4 6H5L1 7z" fill="#d4d4d4" stroke="#bcbcbc" /><path d="M8 9h4a2 2 0 0 1 0 5H9M9.500 7L8 9l1.500 2" stroke="#fff" strokeWidth="1.500" /></Svg>,
  align: (
    <Svg w={16} h={16}>
      <path d="M0.500 13L4 3l4 10zM7.500 3h8L12 13z" fill="#cfeafc" stroke="#4ab0f0" />
      <path d="M3 0l9 16M6 0l3 5" stroke="#f08a6a" strokeDasharray="1 3" />
    </Svg>
  ),
};

function EditBtn({ icon, label, className = "text-[#7b7b7b]", gap = "gap-1" }) {
  return (
    <button type="button" className={"flex items-center whitespace-nowrap " + gap + " " + className}>
      {icon}
      {label}
    </button>
  );
}

function EditBar() {
  return (
    <div className="flex h-[27px] shrink-0 items-center pl-1 text-black">
      <span className="mr-1.5 h-4 w-0.5 bg-[repeating-linear-gradient(to_bottom,#a8adb4_0_1px,transparent_1px_3px)]" />
      <div className="flex gap-2">
        {[["上移", 0], ["左移", -90], ["右移", 90], ["下移", 180]].map(([n, r]) => (
          <button type="button" key={n} aria-label={n}><ArrowIcon rot={r} /></button>
        ))}
      </div>
      <label htmlFor="nudge" className="ml-2 whitespace-nowrap">微调</label>
      <Picker id="nudge" options={["1", "5", "10"]} className="ml-1 w-[62px]" selectClass="pl-1" />
      <VLine className="mx-1 h-[22px]" />
      <EditBtn icon={E.ccw} label="左旋(A)" />
      <span className="w-2.5" />
      <EditBtn icon={E.cw} label="右旋(D)" />
      <label htmlFor="angle" className="ml-2.5 whitespace-nowrap">旋转角度</label>
      <Picker id="angle" options={["10°", "45°"]} className="ml-1 w-14" selectClass="pl-1" />
      <VLine className="mx-1 h-[22px]" />
      <EditBtn icon={E.ccw90} label="左旋90°(S)" />
      <span className="w-2.5" />
      <EditBtn icon={E.cw90} label="右旋90°(W)" />
      <span className="w-2.5" />
      <EditBtn icon={E.best} label="转至最佳(Q)" />
      <span className="w-2.5" />
      <EditBtn icon={E.mirror} label="镜像(M)" />
      <span className="w-3" />
      <EditBtn icon={E.restore} label="还原(O)" />
      <VLine className="mr-0.5 ml-2 h-[22px]" />
      <button type="button" className="h-[22px] w-14 shrink-0 border border-[#0b72d8] bg-[#d6dae3] leading-4 whitespace-nowrap">自动吸附</button>
      <label htmlFor="snap" className="ml-1 whitespace-nowrap">吸附半径</label>
      <Picker id="snap" options={["20", "50"]} className="ml-1.5 w-20" selectClass="pl-1" />
      <VLine className="mx-1.5 h-[22px]" />
      <EditBtn icon={E.align} label="对齐旋转(Alt+R)" className="text-black" />
    </div>
  );
}

/* ---------- command log ---------- */

const log = ["命令: 区域骨架切碎", "*取消*", "撤销命令：区域骨架切碎", "命令: 区域骨架切碎", "*取消*", "撤销命令：区域骨架切碎"];

function LogPanel() {
  return (
    <section className="flex h-[147px] shrink-0 flex-col border-r-2 border-b-2 border-[#9098a5]">
      <div className="ml-[7px] flex h-6 shrink-0 items-end border-b border-[#3a3a3a] pl-[11px]" role="tablist">
        <button type="button" role="tab" aria-selected="true" className="flex h-5 items-center gap-0.5 border border-b-0 border-[#6a6e76] bg-[#a8c9f0] pt-0.5 pr-1 pl-0.5 text-black">
          <Svg w={17} h={16}>
            <path d="M2 1v10h9z" fill="#c8d8ff" stroke="#2a4ac0" strokeWidth="1.300" />
            <path d="M6 9l7-8 2 2-7 7-3 1z" fill="#f5b52e" stroke="#b5701a" />
            <path d="M13 1l2 2 1-1-2-2z" fill="#e03030" />
            <path d="M1 12h15v3H1z" fill="#f0c040" stroke="#a87a10" />
          </Svg>
          绘图
        </button>
        <button type="button" role="tab" aria-selected="false" className="ml-1 flex h-5 items-center gap-0.5 pt-0.5 text-black">
          <Svg w={17} h={16}>
            <path d="M1.500 3.500h10v12h-10z" fill="#f2f7fc" stroke="#6a8cb8" />
            <path d="M3 9h7M3 11h7M3 13h7" stroke="#a8bcd4" />
            <path d="M1 3h10l5 6-3-1v3L9 7H1z" fill="#1e88f0" />
            <path d="M3 1v2M5 1v2M7 1v2M9 1v2" stroke="#555" />
          </Svg>
          系统
        </button>
        <VLine className="mb-0.5 ml-1 h-3.5 bg-[#8a9098]" />
        <span className="mb-[5px] ml-[128px] flex"><Chevron dir="left" className="text-[#c0c4c8]" /></span>
        <span className="mr-0.5 mb-[5px] ml-auto flex"><Chevron dir="right" className="text-[#c0c4c8]" /></span>
      </div>
      <div className="mt-1.5 flex min-h-0 flex-1 pl-[11px]">
        <div className="flex min-w-0 flex-1 flex-col">
          <div className="flex h-[95px] flex-col justify-end overflow-hidden text-[13px] leading-[17px] text-black">
            {log.map((l, i) => (
              <p key={i} className="shrink-0">{l}</p>
            ))}
          </div>
          <div className="flex items-center justify-between pt-1">
            <Chevron dir="left" className="text-[#707070]" />
            <Chevron dir="right" className="text-[#707070]" />
          </div>
        </div>
        <div className="flex w-[22px] flex-col items-center pt-0.5 pb-[19px]">
          <Chevron dir="up" className="text-black" />
          <span className="mt-auto mb-1 h-5 w-[11px] rounded-[50%] bg-[#cacccb]" />
          <Chevron dir="down" className="text-black" />
        </div>
      </div>
    </section>
  );
}

/* ---------- nesting results ---------- */

function NestPanel() {
  return (
    <aside className="w-[279px] shrink-0">
      <h2 className="pt-0.5 text-center leading-[18px] text-[#0b72d8]">排样(1种，勾选0种, 共1张)</h2>
      <div className="mt-px flex h-[35px] items-center pl-2">
        <ToolBtn label="添加排样">{Plus}</ToolBtn>
        <Caret className="mr-[9px] ml-[9px] text-black" />
        <ToolBtn label="删除排样">{Minus}</ToolBtn>
        <Caret className="mr-4 ml-[9px] text-[#a0a4a8]" />
        <ToolBtn label="勾选">{Checks}</ToolBtn>
        <Caret className="mr-2 ml-1.5 text-black" />
        <ToolBtn label="排样排序"><SortIcon up /></ToolBtn>
        <Caret className="mr-[9px] ml-1.5 text-black" />
        <ToolBtn label="保存">
          <Svg w={26} h={26}>
            <path d="M0 0h26v26H3l-3-3z" fill="#a8a8a8" />
            <path d="M4 0h18v14H4z" fill="#f4f6f7" />
            <path d="M6 4h14M6 7h14M6 10h14" stroke="#c8d0d4" />
            <path d="M6 18h14v8H6z" fill="#dcdcdc" />
            <path d="M9 19h4v6H9z" fill="#8a8a8a" />
          </Svg>
        </ToolBtn>
        <Caret className="ml-[9px] text-[#a0a4a8]" />
      </div>
      <div className="flex h-20 bg-[#a8c9f0] text-[#6a6e72]">
        <Tick id="nest1" label="排版1" className="mt-[26px] bg-transparent" />
        <span className="mt-px ml-[10px]">
          <Svg w={58} h={70}>
            <rect x="0.500" y="0.500" width="56" height="68" stroke="#000" strokeDasharray="9 3 3 3" />
            <rect x="17.500" y="8.500" width="22" height="17" fill="#208000" stroke="#000" />
            <path d="M23 14.500h8" stroke="#000" strokeWidth="3" />
            <circle cx="20.500" cy="22" r="2" fill="#a8c9f0" stroke="#000" />
            <rect x="25.500" y="31.500" width="9" height="4" fill="#62c974" stroke="#000" />
            <path d="M28 33.500h4" stroke="#000" />
            <rect x="17.500" y="41.500" width="21" height="17" fill="#04803f" stroke="#000" />
            <path d="M23 48.500h8" stroke="#000" strokeWidth="2" />
            <circle cx="20" cy="55" r="2" fill="#a8c9f0" stroke="#000" />
          </Svg>
        </span>
        <div className="ml-1 flex-1 leading-4">
          <div className="leading-5 font-bold">排版1</div>
          <div className="pt-1">1520.00x1260.00</div>
          <div className="grid grid-cols-[86px_auto]">
            <span>3个零件</span>
            <span>数量1</span>
          </div>
          <div>利用率19.60%</div>
        </div>
        <div className="flex flex-col gap-1.5 pt-[3px] pr-[5px]">
          <button type="button" aria-label="导出排版">
            <Svg w={14} h={13}>
              <path d="M3 8.500H.5v4h13v-4H11M5 9.500V5.500H2.500L7 .7l4.500 4.800H9v4z" stroke="#fff" />
            </Svg>
          </button>
          <button type="button" aria-label="排版详情">
            <Svg w={14} h={14}>
              <path d="M.5.500h12v12H.5zM.5 5h4v3h4V5h4M8.500 8v4.500M4.500 1v4" stroke="#fff" />
            </Svg>
          </button>
        </div>
      </div>
    </aside>
  );
}

function StatusBar() {
  return (
    <footer className="flex h-6 shrink-0 items-center justify-end border-t border-[#9098a5] bg-[linear-gradient(to_bottom,#dce8ee_0,#d6dbe3_8px,#cbcfd1_15px,#babec1_23px)] text-black">
      <VLine className="h-5 bg-[#a0a6ad]" />
      <output className="w-[104px] text-center">176.46, 327.27</output>
      <VLine className="h-5 bg-[#a0a6ad]" />
      <label htmlFor="step" className="pr-1 pl-[7px] text-[#1d3557]">微调</label>
      <Picker id="step" options={["1", "5"]} className="mr-px h-5 w-[61px] bg-[#fafafa]" selectClass="pl-1" />
    </footer>
  );
}

export default function App() {
  return (
    <div className="flex h-screen flex-col overflow-hidden bg-[#fafafa] font-['Noto_Sans','Noto_Sans_CJK_SC',sans-serif] text-xs">
      <Ribbon />
      <div className="h-1 shrink-0 bg-[#d6dce4]" />
      <main className="flex min-h-0 flex-1">
        <PartsPanel />
        <div className="ml-1 flex min-w-0 flex-1 flex-col">
          <div className="flex min-h-0 flex-1">
            <RulerLeft />
            <div className="flex min-w-0 flex-1 flex-col">
              <RulerTop />
              <Drawing />
            </div>
            <div className="flex w-[23px] shrink-0 flex-col items-center py-0.5">
              <Chevron dir="up" />
              <div className="mt-[56px] mb-[90px] w-[21px] flex-1 bg-[#cacccb]" />
              <Chevron dir="down" />
            </div>
          </div>
          <EditBar />
          <LogPanel />
        </div>
        <NestPanel />
      </main>
      <StatusBar />
    </div>
  );
}
